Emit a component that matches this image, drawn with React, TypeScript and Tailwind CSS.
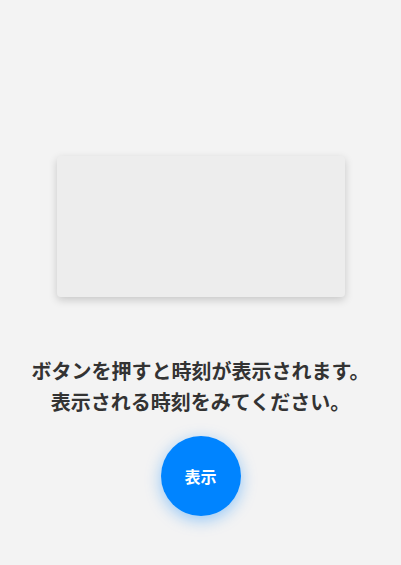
const App = () => {
  return (
    <main
      className="flex min-h-screen flex-col items-center bg-[#f3f3f3] pt-[156px]"
      style={{ fontFamily: '"Noto Sans CJK JP", "Noto Sans", sans-serif' }}
    >
      <div className="h-[141px] w-[288px] rounded bg-[#ededed] shadow-[0_3px_8px_rgba(0,0,0,0.18)]" />
      <p className="mt-[58px] text-center text-[20px] font-bold leading-[31px] text-[#333]">
        ボタンを押すと時刻が表示されます。
        <br />
        表示される時刻をみてください。
      </p>
      <button className="mt-[19px] flex h-20 w-20 items-center justify-center rounded-full bg-[#0084ff] text-[16px] font-bold text-white shadow-[0_4px_16px_rgba(0,132,255,0.4)]">
        表示
      </button>
    </main>
  );
};

export default App;
